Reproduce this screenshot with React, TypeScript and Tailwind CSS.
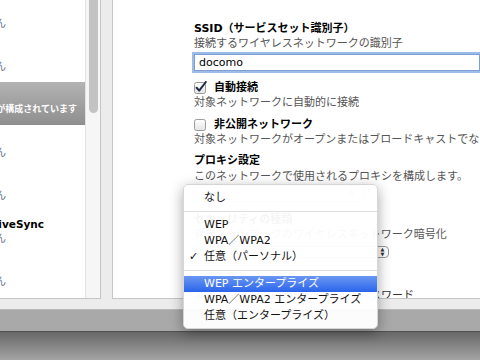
import React from 'react'

const rows = [
  { sub: '接続していません' },
  { sub: '接続していません' },
  { sub: 'プロファイルが構成されています', selected: true },
  { sub: '接続していません' },
  { sub: '接続していません' },
  { title: 'Exchange ActiveSync', sub: '接続していません' },
  { sub: '接続していません' },
]

function Checkbox({ checked }: { checked?: boolean }) {
  return (
    <svg width="14" height="13" viewBox="0 0 14 13" className="shrink-0">
      <defs>
        <linearGradient id="cbg" x1="0" y1="0" x2="0" y2="1">
          <stop offset="0" stopColor="#ffffff" />
          <stop offset="1" stopColor="#e4e4e4" />
        </linearGradient>
      </defs>
      <rect x="0.5" y="1.5" width="11" height="11" rx="2" fill="url(#cbg)" stroke="#9a9a9a" />
      {checked && (
        <path d="M2.6 6.8 L5.2 9.6 L11.8 1" fill="none" stroke="#1d2a4a" strokeWidth="2" strokeLinecap="round" strokeLinejoin="round" />
      )}
    </svg>
  )
}

function MenuItem({ label, checked, active }: { label: string; checked?: boolean; active?: boolean }) {
  return (
    <div
      className={
        active
          ? 'relative h-[16px] flex items-center pl-[20px] text-white bg-gradient-to-b from-[#6b97f3] to-[#2a63ea]'
          : 'relative h-[16px] flex items-center pl-[20px] text-[#111]'
      }
    >
      {checked && <span className="absolute left-[5px] text-[11px]">✓</span>}
      <span className="whitespace-nowrap">{label}</span>
    </div>
  )
}

function Sep() {
  return (
    <div className="h-[11px] flex items-center">
      <div className="w-full h-px bg-[#dedede]" />
    </div>
  )
}

export default function App() {
  return (
    <div className="w-[480px] h-[360px] overflow-hidden relative bg-[#ececec] flex flex-col font-[family-name:'DejaVu_Sans','Noto_Sans_CJK_JP',sans-serif]">
      {/* Panels */}
      <div className="h-[299px] flex shrink-0">
        <div className="w-[101px] flex bg-white border-b border-r border-[#c6c6c6]">
          <div className="w-[86px] overflow-hidden flex flex-col -mt-[4px]">
            {rows.map((r, i) => (
              <div
                key={i}
                className={
                  r.selected
                    ? 'h-[43px] shrink-0 flex flex-col pt-[7px] bg-gradient-to-b from-[#b3b3b3] to-[#8f8f8f]'
                    : 'h-[43px] shrink-0 flex flex-col pt-[7px]'
                }
              >
                <div className="h-[14px] w-[44px] flex justify-end items-center whitespace-nowrap text-[10.5px] font-bold text-black">
                  {r.title}
                </div>
                <div
                  className={
                    r.selected
                      ? 'h-[13px] w-[77px] flex justify-end items-center whitespace-nowrap text-[9px] font-bold text-white'
                      : 'h-[13px] w-[6px] flex justify-end items-center whitespace-nowrap text-[10px] text-[#66708a]'
                  }
                >
                  {r.sub}
                </div>
              </div>
            ))}
          </div>
          <div className="w-[15px] bg-[#f6f6f6] border-l border-[#e2e2e2] flex justify-center">
            <div className="w-[9px] h-[123px] -mt-[10px] rounded-full bg-[#c3c3c3]" />
          </div>
        </div>
        <div className="w-[11px]" />
        <div className="flex-1 bg-white border-l border-b border-[#c6c6c6] overflow-hidden flex flex-col pl-[81px] pt-[21px] text-[11px] leading-[15px] whitespace-nowrap">
          <div className="font-bold text-black">SSID（サービスセット識別子）</div>
          <div className="text-[#555]">接続するワイヤレスネットワークの識別子</div>
          <div className="mt-[3px] h-[18px] border border-[#7d9fd3] shadow-[0_0_0_2px_#9dbbe6] flex items-center pl-[4px] text-black">
            docomo
          </div>
          <div className="mt-[9px] flex items-center gap-[6px] font-bold text-black">
            <Checkbox checked />
            <span>自動接続</span>
          </div>
          <div className="text-[#555]">対象ネットワークに自動的に接続</div>
          <div className="mt-[7px] flex items-center gap-[6px] font-bold text-black">
            <Checkbox />
            <span>非公開ネットワーク</span>
          </div>
          <div className="text-[#555]">対象ネットワークがオープンまたはブロードキャストでない場合に選択</div>
          <div className="mt-[6px] font-bold text-black">プロキシ設定</div>
          <div className="mt-[1px] text-[#555]">このネットワークで使用されるプロキシを構成します。</div>
          <div className="mt-[1px] w-[170px] h-[19px] rounded-[4px] border border-[#a8a8a8] flex items-center justify-end px-[8px]">
            <span className="text-[8px] text-[#444]">⇕</span>
          </div>
          <div className="mt-[10px] font-bold text-black">セキュリティの種類</div>
          <div className="text-[#555]">対象ネットワークのワイヤレスネットワーク暗号化</div>
          <div className="mt-[4px] w-[195px] h-[15px] rounded-[4px] border border-[#9a9a9a] flex items-stretch">
            <div className="flex-1" />
            <div className="w-[12px] border-l border-[#b0b0b0] flex flex-col items-center justify-center text-[5px] leading-[5px] text-[#333]">
              <span>▲</span>
              <span>▼</span>
            </div>
          </div>
          <div className="mt-[30px] text-[#333]">ネットワークへの接続に使用するパスワード</div>
        </div>
      </div>

      {/* Bottom bars */}
      <div className="h-[10px] shrink-0" />
      <div className="h-[22px] shrink-0 bg-[#a9a9a9] border-t border-[#b8b8b8]" />
      <div className="flex-1 border-t border-[#525252] bg-gradient-to-b from-[#686868] to-[#a4a4a4]" />

      {/* Popup menu */}
      <div className="absolute left-[183px] top-[184px] w-[195px] pt-[5px] pb-[4px] rounded-[5px] bg-white/[0.96] shadow-[0_4px_14px_rgba(0,0,0,0.35)] border border-[#d6d6d6] text-[11px]">
        <MenuItem label="なし" />
        <Sep />
        <MenuItem label="WEP" />
        <MenuItem label="WPA／WPA2" />
        <MenuItem label="任意（パーソナル）" checked />
        <Sep />
        <MenuItem label="WEP エンタープライズ" active />
        <MenuItem label="WPA／WPA2 エンタープライズ" />
        <MenuItem label="任意（エンタープライズ）" />
      </div>
    </div>
  )
}
